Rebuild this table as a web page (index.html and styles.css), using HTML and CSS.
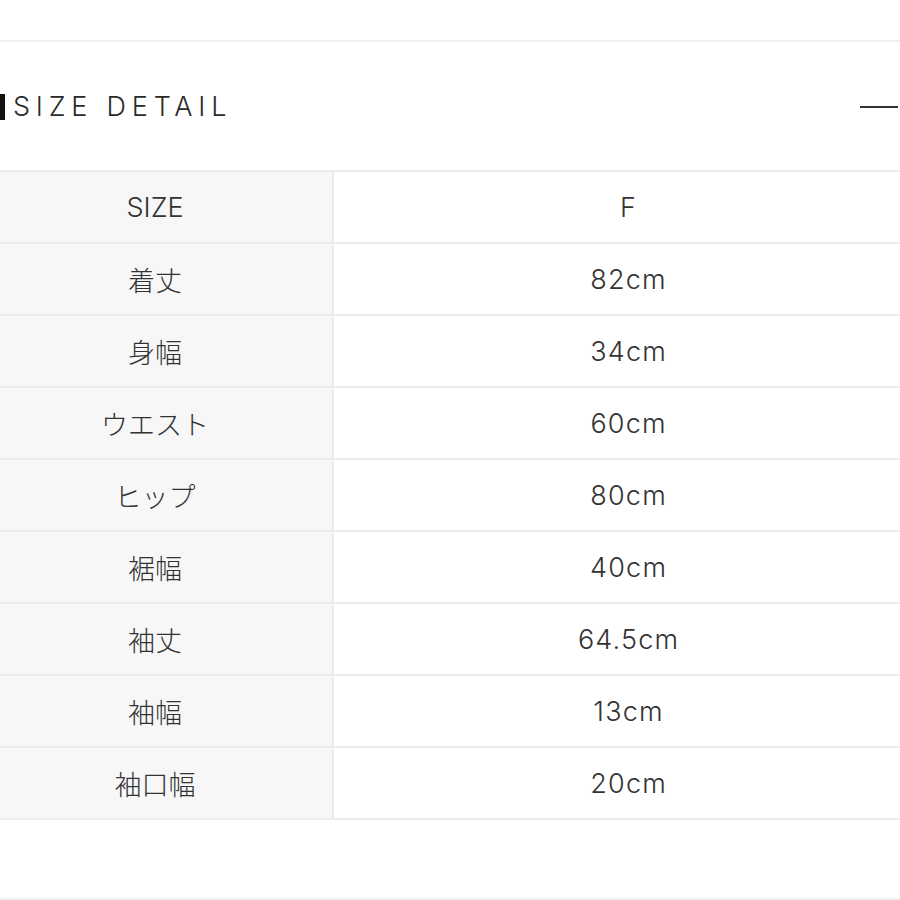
FILE: index.html
```html
<!DOCTYPE html>
<html lang="ja">
<head>
<meta charset="utf-8">
<link rel="stylesheet" href="styles.css">
</head>
<body>
<div class="page">
  <section class="accordion">
    <div class="acc-head">
      <h2 class="title">SIZE DETAIL</h2>
      <span class="toggle"></span>
    </div>
    <table class="size-table">
      <tr><th>SIZE</th><td>F</td></tr>
      <tr><th>着丈</th><td>82cm</td></tr>
      <tr><th>身幅</th><td>34cm</td></tr>
      <tr><th>ウエスト</th><td>60cm</td></tr>
      <tr><th>ヒップ</th><td>80cm</td></tr>
      <tr><th>裾幅</th><td>40cm</td></tr>
      <tr><th>袖丈</th><td>64.5cm</td></tr>
      <tr><th>袖幅</th><td>13cm</td></tr>
      <tr><th>袖口幅</th><td>20cm</td></tr>
    </table>
    <div class="acc-foot"></div>
  </section>
</div>
</body>
</html>
```

FILE: styles.css
```css
html, body {
  margin: 0;
  padding: 0;
  background: #fff;
}
body {
  font-family: Inter, "Noto Sans CJK JP", sans-serif;
  color: #333;
}
.page {
  width: 900px;
  height: 900px;
  overflow: hidden;
  padding-top: 40px;
  box-sizing: border-box;
}
.accordion {
  border-top: 2px solid #efefef;
}
.acc-head {
  height: 128px;
  display: flex;
  align-items: center;
  justify-content: space-between;
  border-bottom: 2px solid #ececec;
}
.title {
  margin: 0;
  font-weight: 300;
  font-size: 27px;
  letter-spacing: 5.8px;
  color: #2a2a2a;
  border-left: 5px solid #111;
  padding-left: 8px;
  line-height: 26px;
  margin-top: 1px;
}
.toggle {
  width: 38px;
  height: 2px;
  background: #333;
  margin-right: 2px;
  margin-top: 2px;
}
.size-table {
  width: 944px;
  margin-left: -22px;
  border-collapse: collapse;
  table-layout: fixed;
}
.size-table th,
.size-table td {
  height: 70px;
  border-bottom: 2px solid #ececec;
  text-align: center;
  font-weight: 300;
  font-size: 27px;
  color: #333;
  padding: 0;
}
.size-table th {
  width: 354px;
  background: #f7f7f7;
  border-right: 2px solid #ececec;
}
.size-table td {
  background: #fff;
  letter-spacing: 1.2px;
  text-indent: 1.2px;
}
.acc-foot {
  height: 78px;
  border-bottom: 2px solid #efefef;
}
```
